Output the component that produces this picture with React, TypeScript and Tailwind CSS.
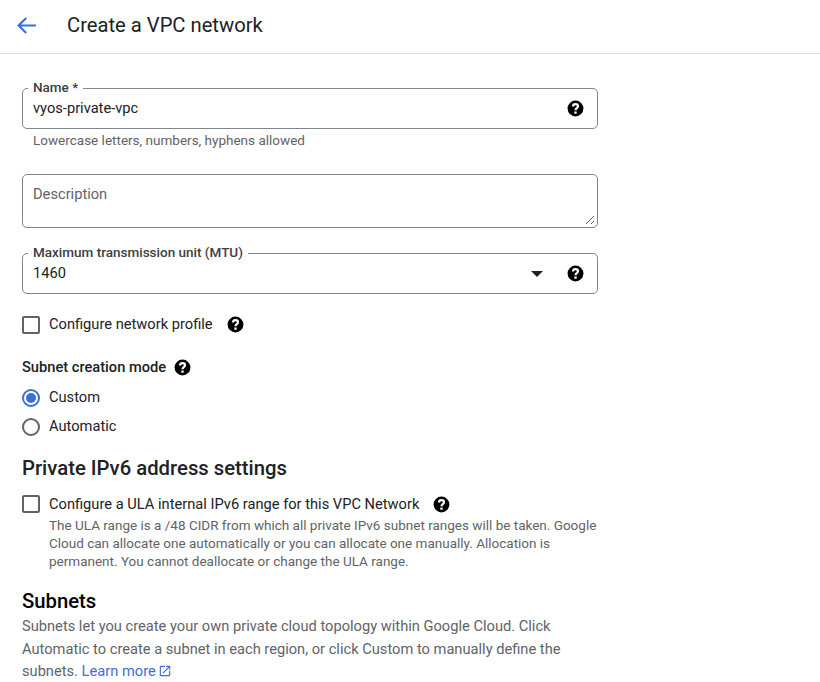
function Help({ className = "" }: { className?: string }) {
  return (
    <svg width="19" height="19" viewBox="0 0 24 24" className={"shrink-0 " + className}>
      <circle cx="12" cy="12" r="10" fill="#000" />
      <path fill="none" stroke="#fff" strokeWidth="2.8" d="M8.9 9.4c0-1.8 1.3-3 3.1-3s3.1 1.2 3.1 2.8c0 2.4-3.1 2.5-3.1 5.1" />
      <rect x="10.5" y="15.8" width="3" height="2.8" fill="#fff" />
    </svg>
  );
}

function Outlined({ label, height, children }: { label?: string; height: string; children: React.ReactNode }) {
  return (
    <div className={"relative flex items-center rounded-[5px] border border-[#80868b] pl-[10px] pr-[12px] " + height}>
      {label && (
        <span className="absolute left-[5px] top-[-10px] bg-white px-[5px] text-[13.5px] leading-[16px] font-medium text-[#3c4043]">
          {label}
        </span>
      )}
      {children}
    </div>
  );
}

function Check() {
  return <span className="block h-[18px] w-[18px] shrink-0 rounded-[2px] border-2 border-[#5f6368]" />;
}

export default function App() {
  return (
    <div className="h-[682px] w-[820px] overflow-hidden bg-white font-['Roboto',sans-serif] text-[14.67px] text-[#202124]">
      <header className="flex h-[54px] items-center border-b border-[#dadce0] pl-[14px]">
        <svg width="25" height="25" viewBox="0 0 24 24" fill="#3b6fd8" className="mt-[-3px]">
          <path d="M21 11H6.83l5.59-5.59L11 4l-8 8 8 8 1.41-1.41L6.83 13H21z" />
        </svg>
        <h1 className="ml-[28px] mt-[-3px] text-[20.2px] leading-[28px] font-normal text-[#202124]">Create a VPC network</h1>
      </header>

      <main className="w-[598px] pl-[22px] pt-[34px]">
        <Outlined label="Name *" height="h-[41px]">
          <span className="mt-[-2px] flex-1">vyos-private-vpc</span>
          <Help />
        </Outlined>
        <p className="mt-[2px] pl-[11px] text-[13.5px] leading-[18px] text-[#5f6368]">Lowercase letters, numbers, hyphens allowed</p>

        <div className="relative mt-[25px] h-[54px] rounded-[5px] border border-[#80868b] pl-[10px] pt-[8px]">
          <span className="leading-[20px] text-[#5f6368]">Description</span>
          <svg width="12" height="12" viewBox="0 0 12 12" className="absolute bottom-[1px] right-[1px]" stroke="#5f6368" strokeWidth="1">
            <path d="M2 10 10 2M7 10 10 7" />
          </svg>
        </div>

        <div className="mt-[25px]">
          <Outlined label="Maximum transmission unit (MTU)" height="h-[41px]">
            <span className="mt-[-2px] flex-1">1460</span>
            <span className="mr-[23px] h-0 w-0 border-x-[6px] border-t-[6px] border-x-transparent border-t-[#202124]" />
            <Help />
          </Outlined>
        </div>

        <div className="mt-[21px] flex h-[20px] items-center">
          <Check />
          <span className="ml-[9px] mt-[-2px]">Configure network profile</span>
          <Help className="ml-[13px] mt-[-2px]" />
        </div>

        <div className="mt-[22px] flex h-[20px] items-center">
          <span className="font-medium">Subnet creation mode</span>
          <Help className="ml-[7px]" />
        </div>

        <div className="mt-[11px] flex h-[20px] items-center">
          <span className="flex h-[18px] w-[18px] items-center justify-center rounded-full border-2 border-[#3b6fd8]">
            <span className="block h-[10px] w-[10px] rounded-full bg-[#3b6fd8]" />
          </span>
          <span className="ml-[9px] mt-[-2px]">Custom</span>
        </div>
        <div className="mt-[9px] flex h-[20px] items-center">
          <span className="block h-[18px] w-[18px] rounded-full border-2 border-[#5f6368]" />
          <span className="ml-[9px] mt-[-2px]">Automatic</span>
        </div>

        <h2 className="mt-[19px] text-[20.3px] leading-[24px] font-medium text-[#202124]">Private IPv6 address settings</h2>

        <div className="mt-[14px] flex h-[20px] items-center">
          <Check />
          <span className="ml-[9px]">Configure a ULA internal IPv6 range for this VPC Network</span>
          <Help className="ml-[13px]" />
        </div>
        <p className="mt-[2px] pl-[27px] text-[13.5px] leading-[18px] text-[#5f6368]">
          The ULA range is a /48 CIDR from which all private IPv6 subnet ranges will be taken. Google Cloud can allocate one automatically or you can allocate one manually. Allocation is permanent. You cannot deallocate or change the ULA range.
        </p>

        <h2 className="mt-[19px] text-[20.3px] leading-[24px] font-medium text-black">Subnets</h2>
        <p className="mt-[2px] leading-[22.5px] text-[#5f6368]">
          Subnets let you create your own private cloud topology within Google Cloud. Click Automatic to create a subnet in each region, or click Custom to manually define the subnets.{" "}
          <span className="text-[#3b6fd8]">Learn more</span>
          <svg width="14" height="14" viewBox="0 0 24 24" fill="#3b6fd8" className="ml-[2px] inline align-[-2px]">
            <path d="M19 19H5V5h7V3H5a2 2 0 0 0-2 2v14a2 2 0 0 0 2 2h14c1.1 0 2-.9 2-2v-7h-2v7zM14 3v2h3.59l-9.83 9.83 1.41 1.41L19 6.41V10h2V3h-7z" />
          </svg>
        </p>
      </main>
    </div>
  );
}
